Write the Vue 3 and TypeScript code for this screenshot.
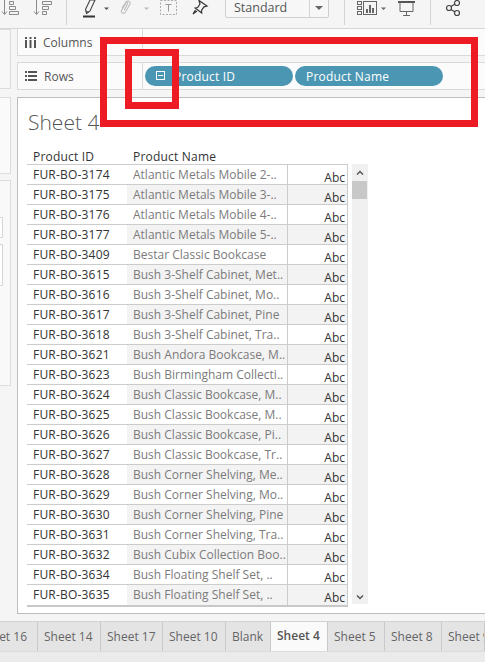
<script setup lang="ts">
const rows: [string, string][] = [
  ['FUR-BO-3174', 'Atlantic Metals Mobile 2-..'],
  ['FUR-BO-3175', 'Atlantic Metals Mobile 3-..'],
  ['FUR-BO-3176', 'Atlantic Metals Mobile 4-..'],
  ['FUR-BO-3177', 'Atlantic Metals Mobile 5-..'],
  ['FUR-BO-3409', 'Bestar Classic Bookcase'],
  ['FUR-BO-3615', 'Bush 3-Shelf Cabinet, Met..'],
  ['FUR-BO-3616', 'Bush 3-Shelf Cabinet, Mo..'],
  ['FUR-BO-3617', 'Bush 3-Shelf Cabinet, Pine'],
  ['FUR-BO-3618', 'Bush 3-Shelf Cabinet, Tra..'],
  ['FUR-BO-3621', 'Bush Andora Bookcase, M..'],
  ['FUR-BO-3623', 'Bush Birmingham Collecti..'],
  ['FUR-BO-3624', 'Bush Classic Bookcase, M..'],
  ['FUR-BO-3625', 'Bush Classic Bookcase, M..'],
  ['FUR-BO-3626', 'Bush Classic Bookcase, Pi..'],
  ['FUR-BO-3627', 'Bush Classic Bookcase, Tr..'],
  ['FUR-BO-3628', 'Bush Corner Shelving, Me..'],
  ['FUR-BO-3629', 'Bush Corner Shelving, Mo..'],
  ['FUR-BO-3630', 'Bush Corner Shelving, Pine'],
  ['FUR-BO-3631', 'Bush Corner Shelving, Tra..'],
  ['FUR-BO-3632', 'Bush Cubix Collection Boo..'],
  ['FUR-BO-3634', 'Bush Floating Shelf Set, ..'],
  ['FUR-BO-3635', 'Bush Floating Shelf Set, ..'],
]

const tabs = [
  { label: 'Sheet 16', w: 38, clip: true },
  { label: 'Sheet 14', w: 63 },
  { label: 'Sheet 17', w: 62 },
  { label: 'Sheet 10', w: 63 },
  { label: 'Blank', w: 45 },
  { label: 'Sheet 4', w: 57, active: true },
  { label: 'Sheet 5', w: 57 },
  { label: 'Sheet 8', w: 57 },
  { label: 'Sheet 9', w: 43 },
]
</script>

<template>
  <div class="app">
    <header class="toolbar">
      <svg class="tool-icons" width="485" height="28" viewBox="0 0 485 28" fill="none">
        <g stroke="#8a8a8a" stroke-width="1">
          <path d="M4.500 0v14M2 11.500l2.500 3 2.500-3" />
          <path d="M9.500 1.500h4v3h-4zM9.500 6.500h6v3h-6zM9.500 11.500h9v3h-9z" />
          <path d="M36.500 0v14M34 11.500l2.500 3 2.500-3" />
          <path d="M42.500 1.500h9v3h-9zM42.500 6.500h6v3h-6zM42.500 11.500h4v3h-4z" />
        </g>
        <path d="M85.500 9.500L90 0h5l-5 11-3.500 2.500z" stroke="#444" stroke-width="1.100" />
        <path d="M86 11l3 1.500" stroke="#444" />
        <path d="M83 16.500h12" stroke="#333" stroke-width="2" />
        <path d="M104 7.500h5l-2.500 2.500z" fill="#555" />
        <path d="M122 8l4-6c1.500-2 5-.5 4 2l-4.500 8c-1.500 2.500-5 1-4-1.500l4.500-7.500c.7-1 2.200-.3 1.700.8l-3.700 6.700" stroke="#bdbdbd" stroke-width="1.100" />
        <path d="M144 7.500h5l-2.500 2.500z" fill="#bbb" />
        <rect x="160.500" y="0.500" width="16" height="14" stroke="#aaa" stroke-dasharray="2 1.500" />
        <path d="M165.500 4.500h6M168.500 4.500v7" stroke="#999" />
        <path d="M199 0.500l8 5.500-3 .8-2.500 3.700.2 2.500-6.500-5 2.500-.5 2.300-3.500zM195.500 10l-2.500 4 3.800-3" stroke="#333" stroke-width="1.200" />
        <path d="M381 7.500h5l-2.500 2.500z" fill="#666" />
        <g stroke="#666" stroke-width="1">
          <rect x="357.500" y="1.500" width="4" height="3" />
          <rect x="357.500" y="6.500" width="4" height="3" />
          <rect x="357.500" y="11.500" width="4" height="3" />
          <rect x="363.500" y="1.500" width="13" height="13" />
        </g>
        <path d="M366 9h2v4h-2zM369 5h2v8h-2zM372 8h2v5h-2z" fill="#666" />
        <path d="M398 2h17" stroke="#555" stroke-width="2" />
        <path d="M400 2v9.500h13V2M406.500 11.500v3.500M403 15.500h7" stroke="#666" />
        <g stroke="#444" stroke-width="1.200">
          <circle cx="457" cy="3" r="2.500" />
          <circle cx="449" cy="8" r="2.500" />
          <circle cx="457" cy="13" r="2.500" />
          <path d="M451 6.500l4-2.500M451 9.500l4 2.500" />
        </g>
      </svg>
      <span class="divider d1"></span>
      <span class="divider d2"></span>
      <span class="divider d3"></span>
      <div class="standard">
        <span class="standard-label">Standard</span>
        <span class="standard-arrow"><i></i></span>
      </div>
    </header>

    <main class="body">
      <aside class="rail">
        <div class="rail-box top"></div>
        <div class="rail-box middle"></div>
        <div class="rail-box lower">
          <div class="mini first"></div>
          <div class="mini second"></div>
        </div>
      </aside>

      <section class="work">
        <div class="shelf">
          <div class="shelf-name">
            <svg width="11" height="11" viewBox="0 0 11 11"><path d="M0 0h2v2H0zM0 3h2v8H0zM4.500 0h2v2h-2zM4.500 3h2v8h-2zM9 0h2v2H9zM9 3h2v8H9z" fill="#555" /></svg>
            <span>Columns</span>
          </div>
        </div>
        <div class="shelf rows-shelf">
          <div class="shelf-name">
            <svg width="12" height="10" viewBox="0 0 12 10"><path d="M0 0h2v2H0zM3 0h9v2H3zM0 4h2v2H0zM3 4h9v2H3zM0 8h2v2H0zM3 8h9v2H3z" fill="#555" /></svg>
            <span>Rows</span>
          </div>
          <div class="pills">
            <div class="pill first-pill">
              <svg width="10" height="10" viewBox="0 0 10 10" fill="none"><rect x="0.500" y="0.500" width="8" height="8" stroke="#fff" /><path d="M2 4.500h5" stroke="#fff" /></svg>
              <span>Product ID</span>
            </div>
            <div class="pill"><span>Product Name</span></div>
          </div>
        </div>

        <div class="sheet">
          <h1 class="title">Sheet 4</h1>
          <div class="viz">
            <div class="table">
              <div class="thead">
                <span class="h1">Product ID</span>
                <span class="h2">Product Name</span>
              </div>
              <div v-for="(r, i) in rows" :key="r[0]" class="row" :class="{ odd: i % 2 === 1 }">
                <span class="c-id">{{ r[0] }}</span>
                <span class="c-name">{{ r[1] }}</span>
                <span class="c-abc">Abc</span>
              </div>
            </div>
            <div class="scroll">
              <svg class="chev" width="8" height="6" viewBox="0 0 8 6" fill="none"><path d="M1 4.500l3-3 3 3" stroke="#555" stroke-width="1.500" /></svg>
              <div class="thumb"></div>
              <svg class="chev down" width="8" height="6" viewBox="0 0 8 6" fill="none"><path d="M1 1.500l3 3 3-3" stroke="#555" stroke-width="1.500" /></svg>
            </div>
          </div>
        </div>
      </section>
    </main>

    <nav class="tabs">
      <div
        v-for="t in tabs"
        :key="t.label"
        class="tab"
        :class="{ active: t.active, clip: t.clip }"
        :style="{ width: t.w + 'px' }"
      >
        <span>{{ t.label }}</span>
      </div>
    </nav>
    <div class="status"></div>

    <div class="mark outer"></div>
    <div class="mark inner"></div>
  </div>
</template>

<style scoped>
.app {
  position: relative;
  width: 485px;
  height: 662px;
  overflow: hidden;
  display: flex;
  flex-direction: column;
  background: #f5f5f5;
  font-family: "Open Sans", "Noto Sans", sans-serif;
  color: #444;
}

/* toolbar */
.toolbar {
  position: relative;
  flex: none;
  height: 29px;
  box-sizing: border-box;
  border-bottom: 1px solid #d6d6d6;
}
.tool-icons { position: absolute; left: 0; top: 0; }
.divider { position: absolute; top: 0; width: 1px; height: 25px; background: #d4d4d4; }
.d1 { left: 66px; }
.d2 { left: 344px; }
.d3 { left: 430px; }
.standard {
  position: absolute;
  left: 225px;
  top: -3px;
  width: 104px;
  height: 21px;
  box-sizing: border-box;
  border: 1px solid #cfcfcf;
  border-radius: 2px;
  display: flex;
  align-items: center;
  background: #f7f7f7;
}
.standard-label { flex: 1; padding-left: 8px; font-size: 12.500px; color: #555; }
.standard-arrow {
  width: 18px;
  height: 100%;
  border-left: 1px solid #d4d4d4;
  display: flex;
  align-items: center;
  justify-content: center;
}
.standard-arrow i {
  width: 0;
  height: 0;
  border-left: 4px solid transparent;
  border-right: 4px solid transparent;
  border-top: 4px solid #666;
}

/* left rail and work area */
.body { flex: none; height: 592px; display: flex; gap: 6px; }
.rail { width: 11px; flex: none; display: flex; flex-direction: column; }
.rail-box {
  box-sizing: border-box;
  border: 1px solid #dcdcdc;
  border-left: none;
  background: #f7f7f7;
}
.rail-box.top { height: 60px; }
.rail-box.middle { height: 77px; margin-top: 8px; background: #fafafa; }
.rail-box.lower {
  position: relative;
  height: 206px;
  margin-top: 6px;
  padding-top: 36px;
  background: #f9f9f9;
}
.mini { width: 3px; box-sizing: border-box; border: 1px solid #d6d6d6; border-left: none; background: #fff; }
.mini.first { height: 21px; }
.mini.second { height: 42px; margin-top: 6px; }

.work { flex: 1; min-width: 0; display: flex; flex-direction: column; }
.shelf {
  flex: none;
  height: 27px;
  box-sizing: border-box;
  border: 1px solid #dadada;
  border-right: none;
  border-top: none;
  display: flex;
  align-items: center;
  background: #fbfbfb;
}
.rows-shelf { margin-top: 6px; border-top: 1px solid #dadada; height: 28px; }
.shelf-name {
  width: 125px;
  height: 100%;
  flex: none;
  box-sizing: border-box;
  border-right: 1px solid #dadada;
  padding-left: 7px;
  display: flex;
  align-items: center;
  gap: 7px;
  font-size: 12px;
  color: #555;
}
.pills { display: flex; gap: 2px; padding-left: 2px; }
.pill {
  width: 148px;
  height: 20px;
  box-sizing: border-box;
  border-radius: 10px;
  background: #4b96b3;
  color: #fff;
  font-size: 12px;
  letter-spacing: 0.2px;
  display: flex;
  align-items: center;
  padding-left: 11px;
  white-space: nowrap;
}
.first-pill { gap: 8px; }

/* sheet */
.sheet {
  flex: 1;
  margin-top: 7px;
  margin-bottom: 7px;
  box-sizing: border-box;
  border: 1px solid #bdbdbd;
  border-right: none;
  background: #fff;
  padding: 0 0 0 9px;
  display: flex;
  flex-direction: column;
}
.title {
  margin: 0;
  height: 50px;
  line-height: 49px;
  font-size: 21px;
  font-weight: 300;
  color: #555;
  padding-left: 1px;
}
.viz { display: flex; gap: 4px; align-items: flex-start; }
.table { width: 321px; flex: none; border-bottom: 2px solid #c8c8c8; }
.thead {
  height: 17px;
  display: flex;
  align-items: center;
  font-size: 12px;
  letter-spacing: 0.2px;
  color: #333;
  border-bottom: 1px solid #ccc;
  box-sizing: border-box;
}
.h1 { width: 100px; padding-left: 6px; box-sizing: border-box; }
.h2 { padding-left: 6px; }
.row {
  display: flex;
  height: 20px;
  box-sizing: border-box;
  border-bottom: 1px solid #ccc;
  font-size: 12px;
  line-height: 19px;
  white-space: nowrap;
}
.row:last-child { border-bottom: none; }
.c-id { width: 100px; flex: none; padding-left: 6px; box-sizing: border-box; color: #333; letter-spacing: 0.2px; }
.c-name {
  width: 161px;
  flex: none;
  padding-left: 6px;
  box-sizing: border-box;
  color: #7b7b7b;
  overflow: hidden;
  border-right: 1px solid #ccc;
}
.c-abc {
  flex: 1;
  box-sizing: border-box;
  text-align: right;
  padding: 6px 2px 0 0;
  color: #333;
  line-height: 14px;
  border-right: 1px solid #ccc;
}
.row.odd .c-name, .row.odd .c-abc { background: #f3f3f3; }

.scroll {
  position: relative;
  width: 16px;
  height: 440px;
  margin-top: 16px;
  background: #f0f0f0;
  display: flex;
  flex-direction: column;
  align-items: center;
}
.chev { margin-top: 6px; flex: none; }
.chev.down { margin-top: auto; margin-bottom: 4px; }
.thumb { width: 15px; height: 18px; margin: 5px 1px 0 0; background: #c8c8c8; }

/* tabs */
.tabs {
  flex: none;
  height: 31px;
  box-sizing: border-box;
  display: flex;
  background: #e4e4e4;
  border-top: 1px solid #d2d2d2;
  border-bottom: 1px solid #dcdcdc;
  overflow: hidden;
}
.tab {
  flex: none;
  box-sizing: border-box;
  border-right: 1px solid #c9c9c9;
  padding-left: 6px;
  font-size: 12px;
  line-height: 29px;
  color: #666;
  white-space: nowrap;
  overflow: hidden;
}
.tab.clip { padding-left: 0; direction: rtl; padding-right: 10px; }
.tab.active { background: #fafafa; color: #555; font-weight: 600; line-height: 27px; }
.status { flex: 1; background: #ebebeb; }

/* red annotation boxes drawn over the screenshot */
.mark { position: absolute; box-sizing: border-box; border: 7px solid #ed1c24; }
.outer { left: 100px; top: 37px; width: 378px; height: 90px; }
.inner { left: 125px; top: 49px; width: 54px; height: 60px; }
</style>
